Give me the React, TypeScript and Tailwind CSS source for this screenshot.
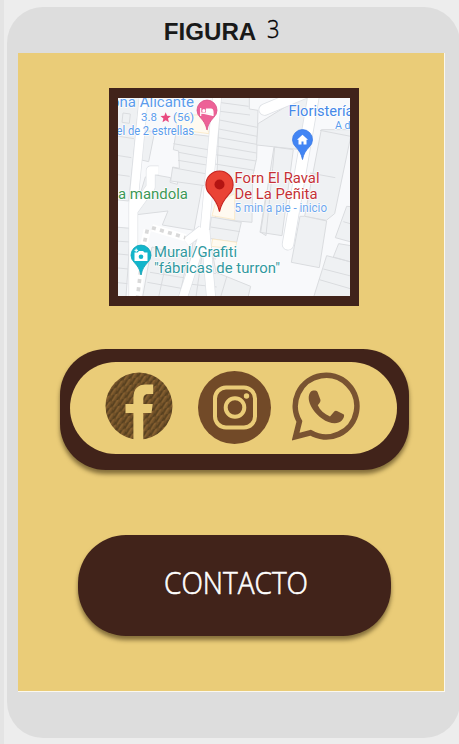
const block = "#eff1f3";
const edge = "#dadcdf";

function Pin({ x, y, scale, fill, stroke }: { x: number; y: number; scale: number; fill: string; stroke: string }) {
  return (
    <path
      transform={`translate(${x} ${y}) scale(${scale})`}
      d="M0 20C-1.2 14-3.5 11-6.7 7.5A10 10 0 1 1 6.7 7.5C3.5 11 1.2 14 0 20Z"
      fill={fill}
      stroke={stroke}
      strokeWidth=".8"
    />
  );
}

function Label({ x, y, w, size, fill, children }: { x: number; y: number; w: number; size: number; fill: string; children: string }) {
  return (
    <text x={x} y={y} textLength={w} lengthAdjust="spacingAndGlyphs" fontSize={size} fill={fill} stroke="#fff" strokeWidth="1.4" strokeLinejoin="round" paintOrder="stroke">
      {children}
    </text>
  );
}

function StreetMap() {
  return (
    <svg className="block h-[198px] w-[232px] font-['Roboto',sans-serif]" viewBox="118 98 232 198">
      <rect x="118" y="98" width="233" height="198" fill="#f8f9fb" />
      <g transform="translate(108 87) scale(.3333)">
        <g fill={block} stroke={edge} strokeWidth="3">
          <path d="M20 20H96L62 342 20 338Z M20 146l58 9 M20 204l50 8 M20 262l45 6 M45 78l22 3-3 28-22-3z" />
          <path d="M108 130 140 134 122 224 96 218Z" />
          <path d="M132 262 188 272 186 286 208 292 210 272 285 285 258 430 163 414 180 372 78 384 112 270Z" />
          <path d="M204 136 306 148 290 296 188 282 194 240 214 244 212 192 196 188Z M196 170l104 18 M212 196l86 16 M210 220l86 14 M194 242l98 18" />
          <path d="M336 20H424V66L450 70 446 214 434 268 432 406 322 396Z M332 46l90 12 M328 72l98 12 M324 97l124 24 M322 124l126 24 M320 150l126 22 M318 176l128 22 M316 202l128 20 M314 230l126 20" />
          <path d="M450 110 590 24H614L598 190 446 174Z M500 180 494 244 474 446 458 436 498 180 556 188 522 446 456 436 476 310" />
          <path d="M640 128H728V150L680 380 655 400 590 388Z M636 130l92 18 M606 258l76 14" />
          <path d="M590 388 656 402 634 542 550 526 576 388Z" />
          <path d="M740 360 716 358 682 452 740 468Z M706 404l34 10 M692 470 676 510 740 528V478Z M656 506 614 640H740V528Z M646 546l94 24 M634 578l96 28" />
          <path d="M20 420 68 424 54 630H20Z M20 462l46 3 M20 500l42 4 M20 542l40 4 M20 586l38 4" />
          <path d="M310 390 400 406 386 466 302 454Z M308 420l88 14" />
          <path d="M132 480 240 510 214 630H104L120 540Z M126 556l100 16 M118 586l102 18 M170 548l-18 82" />
          <path d="M256 460 310 480 324 556 428 598 418 640H228Z M246 506l78 10 M238 550l86 10 M232 590l94 10 M282 504l-18 126 M356 570l-18 60" />
        </g>
        <path d="M322 350 380 320V398L312 386ZM314 456l72 10-4 20-72-8ZM200 84H280L304 140 208 128Z" fill="#fffaf0" stroke="#fae4b8" strokeWidth="2" />
        <g fill="none" stroke="#dfe2e6" strokeLinejoin="round">
          <path d="M108 20 76 350 76 640M76 372 128 300V250H152M328 20 304 280 290 430 222 640M282 428 234 466M292 430 310 640" strokeWidth="29" />
          <path d="M618 20 540 472M594 16 470 68" strokeWidth="37" strokeLinecap="round" />
        </g>
        <g fill="none" stroke="#fff" strokeLinejoin="round">
          <path d="M108 20 76 350 76 640M76 372 128 300V250H152M328 20 304 280 290 430 222 640M282 428 234 466M292 430 310 640" strokeWidth="25" />
          <path d="M618 20 540 472M594 16 470 68" strokeWidth="32" strokeLinecap="round" />
        </g>
        <path d="M118 428 106 482 88 636M132 422 232 452" fill="none" stroke="#fff" strokeWidth="22" />
        <path d="M118 428 106 482 88 636M132 422 232 452" fill="none" stroke="#d9d9d9" strokeWidth="11" strokeDasharray="12 13" />
      </g>
      <Pin x={207} y={110} scale={1} fill="#ed6197" stroke="#d94d84" />
      <path d="M200.7 108v8M200.7 113.2H213V116M206.5 109H211q2 0 2 3.5h-6.5z" stroke="#fff" strokeWidth="1.2" fill="#fff" />
      <circle cx="203.8" cy="110.7" r="1.6" fill="#fff" />
      <Pin x={302.5} y={139.5} scale={1} fill="#4285f4" stroke="#3878e5" />
      <path d="M302.5 134.8 297 139.8h1.5v4.6h3v-3h2v3h3v-4.6h1.5z" fill="#fff" />
      <Pin x={141} y={255} scale={1} fill="#12b5cb" stroke="#0ea2b6" />
      <path d="M134.5 252.5h3l1.5-1.5h4l1.5 1.5h3v8.5h-13z" fill="#fff" />
      <circle cx="141" cy="256.8" r="2.3" fill="#12b5cb" />
      <path d="M134.5 250.3h3.5M136.2 248.6v3.5" stroke="#fff" />
      <Pin x={219.5} y={184.5} scale={1.36} fill="#ea4335" stroke="#c5221f" />
      <circle cx="219.5" cy="184.5" r="5" fill="#b31412" />
      <Label x={111} y={106.5} w={83} size={14.5} fill="#5b9cec">ona Alicante</Label>
      <Label x={141} y={121.3} w={16} size={11.5} fill="#5b9cec">3.8</Label>
      <path d="m165.7 112.2 1.4 3.5 3.8.3-2.9 2.4.9 3.8-3.2-2-3.2 2 .9-3.8-2.9-2.4 3.8-.3z" fill="#e84a80" />
      <Label x={173} y={121.3} w={21} size={11.5} fill="#5b9cec">(56)</Label>
      <Label x={116.5} y={134.7} w={77.5} size={12} fill="#5b9cec">el de 2 estrellas</Label>
      <Label x={118} y={198.5} w={70} size={14.5} fill="#3b9855">a mandola</Label>
      <Label x={288.5} y={115.7} w={65} size={15} fill="#4588e8">Floristería</Label>
      <Label x={335} y={129} w={15.5} size={11.5} fill="#5b9cec">A d</Label>
      <Label x={234.5} y={183} w={85} size={15} fill="#c53136">Forn El Raval</Label>
      <Label x={234.5} y={198.7} w={83} size={15} fill="#c53136">De La Peñita</Label>
      <Label x={234.5} y={212.2} w={92.5} size={12} fill="#6da6ed">5 min a pie - inicio</Label>
      <Label x={154} y={257} w={83} size={15} fill="#31999f">Mural/Grafiti</Label>
      <Label x={154} y={272.7} w={126} size={15} fill="#31999f">"fábricas de turron"</Label>
    </svg>
  );
}

function FacebookIcon() {
  return (
    <svg className="h-[68px] w-[68px]" viewBox="0 0 68 68">
      <defs>
        <pattern id="weave" width="8" height="6" patternUnits="userSpaceOnUse" patternTransform="rotate(-12)">
          <rect width="8" height="6" fill="#735229" />
          <path d="M-1 6 5-1M4 8 10 1" stroke="#57401f" strokeWidth="1.8" />
          <path d="M1 6 7 0" stroke="#8a6331" strokeWidth="1.2" />
        </pattern>
      </defs>
      <circle cx="34" cy="34" r="33.5" fill="url(#weave)" />
      <path d="M28.4 68V41H20.5V32H28.4V26Q28.4 12.5 41 12.5H48.2V22H43.5Q38.3 22 38.3 27V32H47.7L46.5 41H38.3V68Z" fill="#eacc78" />
    </svg>
  );
}

function InstagramIcon() {
  return (
    <svg className="h-[73px] w-[73px]" viewBox="0 0 73 73">
      <circle cx="36.5" cy="36.5" r="36.5" fill="#724a28" />
      <g fill="none" stroke="#eacc78" strokeWidth="4">
        <rect x="17" y="16.5" width="40" height="40" rx="11" />
        <circle cx="37" cy="36.5" r="9.3" />
      </g>
      <circle cx="48.5" cy="25" r="2.7" fill="#eacc78" />
    </svg>
  );
}

function WhatsAppIcon() {
  return (
    <svg className="h-[69px] w-[68px]" viewBox="0 0 68 69">
      <path d="M3.6 64.6 7.4 49.5A30.8 30.8 0 1 1 18.5 60.7Z" fill="none" stroke="#795331" strokeWidth="5.6" />
      <path d="M19 19.5C20.5 18.2 24.5 18.2 25.5 20L28.5 28C28.8 30 26.5 32 25.8 33.3C28 38 32 42 38 44.5L42.5 39.2Q43.5 38.3 45 39L51.5 42.3C53 43.3 51.5 47 49.8 48.6C46.5 51.8 41.5 51.8 36.5 50C28 47 20.5 38.5 17.8 31.5C16 26 16.5 22 19 19.5Z" fill="#795331" />
    </svg>
  );
}

export default function App() {
  return (
    <div className="h-[744px] w-[459px] overflow-hidden border-l-4 border-[#e4e4e4] bg-[#ededed] pl-[3px] pt-[7px]">
      <main className="h-[731px] w-[453px] rounded-[36px] bg-[#ddd] pl-[11px] font-['Open_Sans',sans-serif]">
        <header className="h-[46px]">
          <svg className="block h-[46px] w-[426px]" viewBox="18 7 426 46">
            <text x="163.8" y="40" textLength="92.5" lengthAdjust="spacingAndGlyphs" fontSize="23" className="font-['Liberation_Sans',sans-serif] font-bold" fill="#191919">FIGURA</text>
            <text x="267" y="38.3" textLength="12.5" lengthAdjust="spacingAndGlyphs" fontSize="25.5" className="font-light" fill="#000" stroke="#000" strokeWidth=".4">3</text>
          </svg>
        </header>
        <section className="flex h-[639px] w-[427px] flex-col items-start border-b border-r border-[#fbf8ee] bg-[#eacc78] pt-[35px]">
          <div className="ml-[91px] h-[218px] w-[250px] border-[9px] border-t-[10px] border-b-[10px] border-[#41231a]">
            <StreetMap />
          </div>
          <nav className="ml-[42px] mt-[43px] h-[121px] w-[349px] rounded-[46px] bg-[#41231a] pl-[10px] pt-[13px] shadow-[0_4px_4px_rgba(50,35,10,0.55)]">
            <div className="flex h-[92px] w-[327px] items-center rounded-full bg-[#eacc78] pl-[35px]">
              <a aria-label="Facebook" className="-mt-1"><FacebookIcon /></a>
              <a aria-label="Instagram" className="ml-[25px] -mt-0.5"><InstagramIcon /></a>
              <a aria-label="WhatsApp" className="ml-[21px] -mt-1"><WhatsAppIcon /></a>
            </div>
          </nav>
          <button className="ml-[60px] mt-[65px] h-[101px] w-[313px] rounded-[48px] bg-[#41231a] shadow-[0_4px_4px_rgba(50,35,10,0.55)]">
            <svg className="block h-[101px] w-[313px]" viewBox="78 535 313 101">
              <text x="164" y="594" textLength="144" lengthAdjust="spacingAndGlyphs" fontSize="30.5" className="font-light" fill="#fff" stroke="#fff" strokeWidth=".6">CONTACTO</text>
            </svg>
          </button>
        </section>
      </main>
    </div>
  );
}
